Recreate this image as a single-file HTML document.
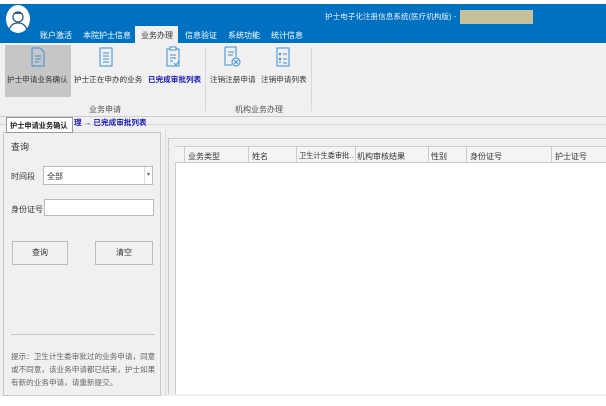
<!DOCTYPE html>
<html><head><meta charset="utf-8"><style>
*{margin:0;padding:0;box-sizing:border-box}
body{width:606px;height:406px;overflow:hidden;background:#f0f0f0;font-family:"Liberation Sans","Noto Sans CJK SC",sans-serif;font-size:8px;color:#333;position:relative}
.a{position:absolute;white-space:nowrap}
</style></head><body>
<div class="a" style="left:0;top:0;width:606px;height:4px;background:#fff"></div>
<div class="a" style="left:0;top:4px;width:606px;height:39px;background:#0071c1"></div>
<div class="a" style="left:6px;top:5px;width:24px;height:28px;border-radius:50%;background:#fff"></div>
<svg class="a" style="left:6px;top:5px" width="24" height="28" viewBox="0 0 24 28"><circle cx="12" cy="12" r="5" fill="none" stroke="#2a5a8a" stroke-width="1.3"/><path d="M7 9 Q12 4 17 9" fill="#2a5a8a"/><path d="M3 25 Q5 18 12 18 Q19 18 21 25" fill="none" stroke="#2a5a8a" stroke-width="1.3"/></svg>
<div class="a" style="left:325px;top:11px;color:#e8f0f8;font-size:7.6px">护士电子化注册信息系统(医疗机构版) -</div>
<div class="a" style="left:460px;top:10px;width:73px;height:14px;background:#c8bf9b"></div>
<div class="a" style="left:40px;top:30px;color:#fff">账户激活</div>
<div class="a" style="left:83px;top:30px;color:#fff">本院护士信息</div>
<div class="a" style="left:135px;top:26px;width:43px;height:17px;background:#f0f0f0"></div>
<div class="a" style="left:141px;top:30px;color:#333">业务办理</div>
<div class="a" style="left:185px;top:30px;color:#fff">信息验证</div>
<div class="a" style="left:228px;top:30px;color:#fff">系统功能</div>
<div class="a" style="left:271px;top:30px;color:#fff">统计信息</div>
<div class="a" style="left:5px;top:45px;width:66px;height:52px;background:#c6c6c6"></div>
<svg class="a" style="left:30px;top:47px" width="16" height="20"><path d="M2 1h8l4 4v14H2z" fill="none" stroke="#3b8fd6"/><path d="M5 9h6M5 12h6M5 15h4" stroke="#3b8fd6"/></svg>
<svg class="a" style="left:98px;top:47px" width="16" height="20"><rect x="2" y="1" width="12" height="18" fill="none" stroke="#3b8fd6"/><path d="M5 6h6M5 9h6M5 12h6M5 15h6" stroke="#3b8fd6"/></svg>
<svg class="a" style="left:165px;top:46px" width="16" height="22"><path d="M2 3h12v17H2z" fill="none" stroke="#3b8fd6"/><rect x="5" y="1" width="6" height="3" fill="#fff" stroke="#3b8fd6"/><path d="M5 9h6M5 12h6M5 15h3M9 17l2 2 3-4" stroke="#3b8fd6" fill="none"/></svg>
<svg class="a" style="left:223px;top:46px" width="18" height="22"><path d="M2 1h11v10M2 1v18h7" fill="none" stroke="#3b8fd6"/><path d="M5 6h6M5 9h5" stroke="#3b8fd6"/><circle cx="13" cy="16" r="4" fill="none" stroke="#3b8fd6"/><path d="M11 14l4 4M15 14l-4 4" stroke="#3b8fd6"/></svg>
<svg class="a" style="left:275px;top:47px" width="16" height="20"><rect x="2" y="1" width="12" height="18" fill="none" stroke="#3b8fd6"/><path d="M4 6l2 2M6 6l-2 2M8 7h4M4 11l2 2M6 11l-2 2M8 12h4M4 15h2M8 16h4" stroke="#3b8fd6"/></svg>
<div class="a" style="left:7px;top:74px;font-size:7.6px">护士申请业务确认</div>
<div class="a" style="left:74px;top:74px;font-size:7.6px">护士正在申办的业务</div>
<div class="a" style="left:148px;top:74px;color:#1a1ab8;font-weight:bold;font-size:7.6px">已完成审批列表</div>
<div class="a" style="left:210px;top:74px;font-size:7.6px">注销注册申请</div>
<div class="a" style="left:261px;top:74px;font-size:7.6px">注销申请列表</div>
<div class="a" style="left:89px;top:104px;color:#555">业务申请</div>
<div class="a" style="left:235px;top:104px;color:#555">机构业务办理</div>
<div class="a" style="left:205px;top:47px;width:1px;height:64px;background:#d8d8d8"></div>
<div class="a" style="left:311px;top:47px;width:1px;height:64px;background:#d8d8d8"></div>
<div class="a" style="left:0;top:116px;width:606px;height:1px;background:#ccc"></div>
<div class="a" style="left:0;top:124px;width:606px;height:1px;background:#d8d8d8"></div>
<div class="a" style="left:74px;top:117px;color:#1a1ab8;font-weight:bold;font-size:7.6px">理 → 已完成审批列表</div>
<div class="a" style="left:3px;top:132px;width:158px;height:264px;border:1px solid #c8c8c8"></div>
<div class="a" style="left:6px;top:117px;width:67px;height:16px;background:#fff;border:1px solid #999;padding:3px 3px;color:#222;font-weight:bold;font-size:7.2px">护士申请业务确认</div>
<div class="a" style="left:11px;top:140px;font-size:9px">查询</div>
<div class="a" style="left:11px;top:171px">时间段</div>
<div class="a" style="left:43px;top:166px;width:110px;height:19px;background:#fff;border:1px solid #bbb;padding:4px 3px">全部</div>
<div class="a" style="left:144px;top:167px;width:1px;height:17px;background:#ddd"></div>
<div class="a" style="left:147px;top:171px;font-size:6px;color:#666">▾</div>
<div class="a" style="left:11px;top:204px">身份证号</div>
<div class="a" style="left:44px;top:199px;width:110px;height:17px;background:#fff;border:1px solid #bbb"></div>
<div class="a" style="left:12px;top:241px;width:56px;height:24px;border:1px solid #bbb;text-align:center;line-height:22px">查询</div>
<div class="a" style="left:95px;top:241px;width:58px;height:24px;border:1px solid #bbb;text-align:center;line-height:22px">清空</div>
<div class="a" style="left:11px;top:334px;width:144px;height:1px;background:#c8c8c8"></div>
<div class="a" style="left:11px;top:350px;color:#666;line-height:13px;font-size:7.6px">提示：卫生计生委审批过的业务申请，同意<br>或不同意，该业务申请都已结束，护士如果<br>有新的业务申请，请重新提交。</div>
<div class="a" style="left:165px;top:130px;width:1px;height:276px;background:#ddd"></div>
<div class="a" style="left:168px;top:138px;width:438px;height:256px;border-top:1px solid #ccc;border-left:1px solid #ccc"></div>
<div class="a" style="left:175px;top:146px;width:431px;height:248px;background:#fff;border-left:1px solid #ccc"></div>
<div class="a" style="left:175px;top:146px;width:431px;height:17px;background:#f4f4f4;border-top:1px solid #ccc;border-bottom:1px solid #ccc"></div>
<div class="a" style="left:184px;top:146px;width:1px;height:17px;background:#ccc"></div>
<div class="a" style="left:248px;top:146px;width:1px;height:17px;background:#ccc"></div>
<div class="a" style="left:296px;top:146px;width:1px;height:17px;background:#ccc"></div>
<div class="a" style="left:355px;top:146px;width:1px;height:17px;background:#ccc"></div>
<div class="a" style="left:428px;top:146px;width:1px;height:17px;background:#ccc"></div>
<div class="a" style="left:466px;top:146px;width:1px;height:17px;background:#ccc"></div>
<div class="a" style="left:551px;top:146px;width:1px;height:17px;background:#ccc"></div>
<div class="a" style="left:188px;top:151px">业务类型</div>
<div class="a" style="left:252px;top:151px">姓名</div>
<div class="a" style="left:299px;top:151px;font-size:7.2px">卫生计生委审批..</div>
<div class="a" style="left:357px;top:151px">机构审核结果</div>
<div class="a" style="left:431px;top:151px">性别</div>
<div class="a" style="left:470px;top:151px">身份证号</div>
<div class="a" style="left:555px;top:151px">护士证号</div>
<div class="a" style="left:0;top:396px;width:606px;height:10px;background:#fff"></div>
</body></html>
